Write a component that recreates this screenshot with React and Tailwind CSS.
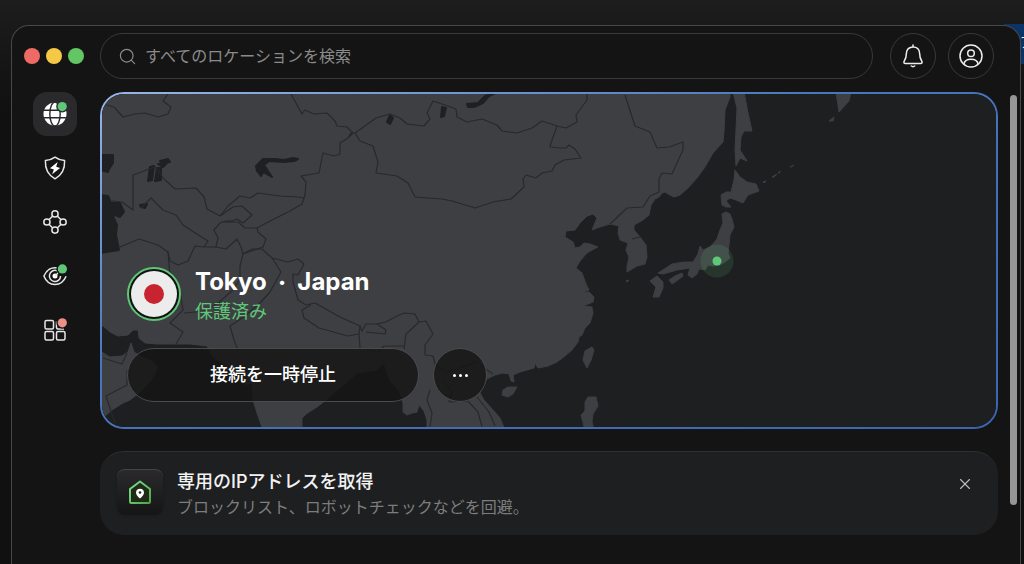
import React, { useState } from 'react';
import { Search, X } from 'lucide-react';

const GlobeIcon = () => (
  <svg width="24" height="24" viewBox="0 0 24 24" fill="none">
    <circle cx="12" cy="12" r="11.5" fill="#fff" />
    <g stroke="#2a2a2c" strokeWidth="1.4">
      <path d="M0 8.2h24M0 15.8h24" />
      <ellipse cx="12" cy="12" rx="5.2" ry="12" />
    </g>
    <circle cx="19.2" cy="4.6" r="6" fill="#2a2a2c" />
    <circle cx="19.2" cy="4.6" r="4.6" fill="#5fc878" />
  </svg>
);

const ShieldIcon = () => (
  <svg width="24" height="24" viewBox="0 0 24 24" fill="none">
    <path
      d="M12 1.2c2.6 2 5.7 3 9.6 3.4.4 8.2-2.6 14.4-9.6 18.2C5 19 2 12.8 2.4 4.6 6.3 4.2 9.4 3.2 12 1.2z"
      stroke="#e6e6e6"
      strokeWidth="1.5"
      strokeLinejoin="round"
    />
    <path d="M14.6 6 7 12.200l3.900 1.200-1.800 4.800 8-6.200-3.900-1.200z" fill="#fff" />
  </svg>
);

const MeshIcon = () => (
  <svg width="24" height="24" viewBox="0 0 24 24" fill="none" stroke="#e6e6e6" strokeWidth="1.5">
    <circle cx="12" cy="3.9" r="3.1" />
    <circle cx="12" cy="20.1" r="3.1" />
    <circle cx="3.9" cy="12" r="3.1" />
    <circle cx="20.1" cy="12" r="3.1" />
    <path d="M9.7 6 6 9.7M14.3 6 18 9.7M9.7 18 6 14.3M14.3 18l3.7-3.7" />
  </svg>
);

const EyeIcon = () => (
  <svg width="24" height="24" viewBox="0 0 24 24" fill="none" stroke="#e6e6e6" strokeWidth="1.5">
    <path d="M14.5 4C8.5 2.6 3.500 6 .9 12c2 5.200 6 8.500 11.100 8.500 5 0 9-3.300 11.100-8.300" />
    <path d="M14 6.700A5.600 5.600 0 1 0 17.600 12" />
    <circle cx="12" cy="12" r="2.5" fill="#fff" stroke="none" />
    <path d="m12 12 4-4" />
    <circle cx="19.4" cy="4.9" r="6" fill="#141414" stroke="none" />
    <circle cx="19.4" cy="4.9" r="4.6" fill="#5fc878" stroke="none" />
  </svg>
);

const AppsIcon = () => (
  <svg width="24" height="24" viewBox="0 0 24 24" fill="none" stroke="#e6e6e6" strokeWidth="1.5">
    <rect x="2" y="2.5" width="8.5" height="8.5" rx="1.5" />
    <rect x="2" y="13.5" width="8.5" height="8.5" rx="1.5" />
    <rect x="13.5" y="13.5" width="8.5" height="8.5" rx="1.5" />
    <path d="M13.500 3.500v6q0 1.500 1.500 1.500h6" />
    <circle cx="19.3" cy="4.8" r="6" fill="#141414" stroke="none" />
    <circle cx="19.3" cy="4.8" r="4.6" fill="#ec8f85" stroke="none" />
  </svg>
);

const BellIcon = () => (
  <svg width="24" height="24" viewBox="0 0 24 24" fill="none" stroke="#ededed" strokeWidth="1.5" strokeLinecap="round" strokeLinejoin="round">
    <path d="M12 .9v2M5.400 9.300C5.400 5.300 8.300 2.900 12 2.900s6.600 2.400 6.600 6.400c0 4.700 1 6.200 2.200 7.900.7 1.200.2 2.300-1.200 2.300H4.400c-1.400 0-1.900-1.100-1.200-2.300 1.200-1.700 2.200-3.200 2.200-7.900z" />
    <path d="M10.300 22q1.700 1.300 3.400 0" />
  </svg>
);

const AccountIcon = () => (
  <svg width="24" height="24" viewBox="0 0 24 24" fill="none" stroke="#ededed" strokeWidth="1.5">
    <circle cx="12" cy="12" r="11" />
    <circle cx="12" cy="9.3" r="3.3" />
    <path d="M4.900 20.200c.5-3.400 2.700-4.900 7.100-4.900s6.600 1.500 7.100 4.900" />
  </svg>
);

const HouseIcon = () => (
  <svg width="24" height="26" viewBox="0 0 24 26" fill="none">
    <defs>
      <linearGradient id="house" x1="0" y1="0" x2="1" y2="1">
        <stop offset="0" stopColor="#7be08c" />
        <stop offset="1" stopColor="#4fa544" />
      </linearGradient>
    </defs>
    <path d="M12 2.500 22 10v12.500q0 1.500-1.500 1.500h-17Q2 24 2 22.500V10z" fill="#1f2a17" stroke="url(#house)" strokeWidth="2" strokeLinejoin="round" />
    <path d="M12 9.800c2.300 0 4 1.600 4 3.900 0 2.200-1.900 3.900-4 5.800-2.100-1.900-4-3.600-4-5.800 0-2.300 1.700-3.900 4-3.900z" fill="#fff" />
    <circle cx="12" cy="13.5" r="1.3" fill="#1f2a17" />
  </svg>
);

const land = [
  // mainland
  'M100 92H730V97L725 110 724 132 723 142 713 153 705 167 697 178 688 188 680 195 674 197 668 194 665 192 662 193 659 197 655 199 651 205 649 215 643 220 634 225 634 230 640 237 646 245 647 257 645 264 637 266 627 272 627 267 629 257 626 250 628 243 620 240 618 233 619 226 610 224 600 227 592 230 597 218 593 214 587 216 580 223 575 230 566 231 565 237 573 242 575 248 580 247 584 243 590 244 598 247 594 249 587 253 580 261 576 268 582 273 586 284 589 290 582 292 589 292 594 297 593 302 583 306 592 307 593 313 590 323 585 328 582 335 579 337 578 342 572 350 565 356 557 362 548 366 538 368 535 363 534 368 520 372 513 375 514 382 511 381 509 374 503 373 495 375 487 379 482 385 480 393 484 400 493 410 500 418 505 430H427L427 420 424 411 419 405 417 412 412 413 407 415 403 412 403 403 400 392 390 381 384 363 376 370 357 373 345 384 337 390 326 400 317 407 306 414 302 418 302 430H263L257 413 253 400 252 383 246 385 237 372 230 372 222 363 213 357 207 346 190 344 157 344 145 343 139 338 138 330 133 330 128 335 118 336 110 332 103 326 100 326z',
  // arabia
  'M100 351 110 357 122 356 128 352 131 343 134 352 142 357 152 361 158 367 155 373 153 378 140 392 130 400 123 403 112 410 105 416 100 419z',
  // taiwan, hainan, luzon
  'M592 347 594 350 591 360 587 368 583 360 585 351z',
  'M517 387 513 394 508 397 502 395 503 390 508 387z',
  'M588 397 596 397 598 406 593 414 592 422 594 430H585L581 415 585 411 585 402z',
  // kyushu, shikoku, honshu
  'M650 281 657 276 663 282 663 288 659 297 653 297 656 287z',
  'M669 280 675 276 682 273 683 276 678 280 672 284z',
  'M658 273 666 268 672 264 684 262 693 262 698 254 700 246 703 250 710 247 717 239 720 230 723 223 722 214 726 212 730 214 732 219 734 227 730 235 729 245 728 253 730 258 725 262 720 265 713 266 708 265 705 270 699 269 697 274 692 278 688 275 690 268 677 270 663 274z',
  // hokkaido
  'M735 170 740 177 747 182 756 184 759 191 748 195 743 203 736 200 730 198 726 201 731 207 726 207 722 205 721 195 726 192 731 192 734 180z',
  // sakhalin, kamchatka, kurils
  'M733 92H744L748 113 752 131 744 131 741 137 740 150 747 161 740 158 736 166 735 150 736 130 737 108z',
  'M836 92H851L849 101 839 112z',
  'M829 121 834 117 833 121zM772 177l5-3-3 3zM763 182l3-1-2 2zM778 173l3-2-2 2zM790 167l4-2-3 2zM626 281l3-1-2 2z',
];

const water = [
  // caspian
  'M100 155 113 155 113 163 109 169 108 172 100 170z',
  'M100 195 108 196 111 203 120 203 124 212 120 217 112 214 117 225 116 235 119 250 100 253z',
  // aral, balkhash, baikal and others
  'M150 167 154 166 152 180 148 181zM157 168 161 168 161 180 155 181zM158 164 167 163 163 167zM160 161 168 159 170 162 164 163zM140 205 147 204 145 208 141 207z',
  'M256 166 263 159 275 159 284 160 293 158 298 159 294 161 284 162 269 161 264 165 272 177 263 172 261 176 257 171z',
  'M467 104 478 103 485 96 497 92 488 97 483 103 474 107 468 107z',
  'M390 115 393 118 390 124 387 122zM442 107 446 108 444 116 441 117z',
];

const borders = [
  'M106 105 114 107 123 117 135 114 145 113 158 117 168 114 171 107 163 101 168 94',
  'M291 94 302 114 305 110 314 114 327 113 335 121 337 126 347 127 353 133',
  'M353 133 349 137 351 133 355 133 362 128 376 118 390 114 400 118 407 124 424 126 430 119 427 113 433 101 445 105 456 109 457 117 467 122 482 119 497 125 502 131 517 133 532 128 542 121 557 126 566 128 577 122 576 115 587 100 587 94',
  'M557 126 551 143 550 147 560 148 566 148 569 145 575 149 581 158 564 160 555 165 552 171 542 173 536 178 526 175 523 179 524 187 511 199 493 202 475 208 452 201 442 199 415 197 408 183 397 176 376 173 378 162 373 146 360 141 355 133',
  'M351 133 348 138 340 143 340 154 334 156 323 153 319 173 301 176 306 182 305 195 302 204 290 211 278 217 270 221 257 228',
  'M625 95 635 126 650 132 657 148 669 147 683 142 683 150 672 174 662 173 659 179 659 192 650 196 643 207 627 208 610 224',
  'M632 239 640 237',
  'M305 198 298 197 280 196 258 193 250 198 240 196 228 206 220 216 207 209 204 197 196 188 175 189 164 179 155 167 133 175 133 210 122 202 112 201',
  'M141 208 151 198 163 210 176 215 183 225 203 238 208 241 204 247 195 246 188 261 178 265 170 261 168 252 158 245 139 239 120 247',
  'M220 216 233 207 242 206 252 215 243 223 237 219 232 221 226 221 220 223 214 230 218 238 216 247 226 249 237 239 241 247 243 254 263 247 266 239 258 232 257 228 245 228 238 222 221 222',
  'M204 247 216 247M243 254 240 266 240 279 233 290 218 303 205 311 184 313',
  'M168 252 170 276 180 290 183 310 170 323 183 332 176 344',
  'M243 254 252 249 262 249 272 258 288 262 298 259 304 264 298 275 293 274 293 282 298 300 306 305 315 303 340 317 360 326 359 334 348 336 319 328 304 318 302 310 311 305',
  'M360 326 362 331 366 324 376 324 386 322 395 317 404 313 415 314 419 322 406 334 404 349 M366 332 385 334 386 330 377 324M419 322 426 321 433 334 425 345 425 355 433 356 435 364',
  'M272 258 281 272 270 292 260 303 245 316 230 326 234 340 238 350M359 334 360 348 378 352 384 346 404 346',
  'M435 364 446 372 460 368 470 364 477 362M480 365 493 374M430 390 427 400 432 413 430 427M443 380 452 392 449 402 468 401 478 412 482 427M477 397 489 412 495 426',
  'M115 423 106 396 127 385 127 370M127 353 122 364 103 358',
];

const MapBackdrop = () => (
  <svg
    className="absolute inset-0 h-full w-full"
    viewBox="102 94 894 333"
    preserveAspectRatio="xMidYMid slice"
    aria-hidden="true"
  >
    <rect x="0" y="0" width="1100" height="600" fill="#1e1f21" />
    <g fill="#3e3f43" stroke="#3e3f43" strokeWidth="1" strokeLinejoin="round">
      {land.map((d) => <path key={d} d={d} />)}
    </g>
    <g fill="#1f2022" stroke="#1f2022" strokeWidth="2" strokeLinejoin="round">
      {water.map((d) => <path key={d} d={d} />)}
    </g>
    <g fill="none" stroke="#28292c" strokeWidth="1.2" strokeLinejoin="round">
      {borders.map((d) => <path key={d} d={d} />)}
    </g>
    <circle cx="717" cy="261" r="16.5" fill="#5fc878" fillOpacity="0.14" />
    <circle cx="717" cy="261" r="4.5" fill="#5fc878" />
  </svg>
);

const navItems = [
  { id: 'vpn', label: 'VPN', icon: GlobeIcon },
  { id: 'threat', label: '脅威対策', icon: ShieldIcon },
  { id: 'mesh', label: 'メッシュネット', icon: MeshIcon },
  { id: 'monitor', label: 'モニター', icon: EyeIcon },
  { id: 'apps', label: 'アプリ', icon: AppsIcon },
];

const Sidebar = () => {
  const [active, setActive] = useState('vpn');

  return (
    <nav className="flex w-[88px] shrink-0 flex-col items-center gap-[10px] pr-[2px]">
      {navItems.map(({ id, label, icon: Icon }) => (
        <button
          key={id}
          type="button"
          aria-label={label}
          onClick={() => setActive(id)}
          className={`flex size-11 cursor-pointer items-center justify-center rounded-[14px] ${
            active === id ? 'bg-[#2a2a2c]' : ''
          }`}
        >
          <Icon />
        </button>
      ))}
    </nav>
  );
};

const Header = () => {
  const [query, setQuery] = useState('');

  return (
    <header className="flex items-center pt-[7px] pr-[26px]">
      <div className="flex w-[88px] shrink-0 gap-[6px] pl-3">
        <button type="button" aria-label="閉じる" className="size-4 rounded-full bg-[#ee6a65]" />
        <button type="button" aria-label="最小化" className="size-4 rounded-full bg-[#f5c945]" />
        <button type="button" aria-label="最大化" className="size-4 rounded-full bg-[#62c664]" />
      </div>
      <label className="flex h-[46px] min-w-0 flex-1 items-center gap-2 rounded-full border border-[#38393a] px-[17px]">
        <Search size={19} strokeWidth={1.5} className="shrink-0 text-[#8b8b8b]" />
        <input
          type="text"
          aria-label="すべてのロケーションを検索"
          placeholder="すべてのロケーションを検索"
          value={query}
          onChange={(e) => setQuery(e.target.value)}
          className="min-w-0 flex-1 bg-transparent text-base text-white outline-none placeholder:text-[#8b8b8b]"
        />
      </label>
      <div className="ml-[17px] flex gap-3">
        <button type="button" aria-label="通知" className="flex size-[46px] items-center justify-center rounded-full border border-[#38393a]">
          <BellIcon />
        </button>
        <button type="button" aria-label="アカウント" className="flex size-[46px] items-center justify-center rounded-full border border-[#38393a]">
          <AccountIcon />
        </button>
      </div>
    </header>
  );
};

const ConnectionCard = () => (
  <section className="rounded-3xl bg-linear-to-br from-[#9ab6e6] via-[#4a76bd] via-40% to-[#3b65b0] p-[2px]">
    <div className="relative flex h-[333px] flex-col justify-end overflow-hidden rounded-[22px] bg-[#1e1f21] p-[25px]">
      <MapBackdrop />
      <div className="relative flex items-center gap-[14px]">
        <div className="flex size-[54px] items-center justify-center rounded-full border-2 border-[#5fc878] bg-[#141414]">
          <div className="flex size-[46px] items-center justify-center rounded-full bg-[#ececec]">
            <div className="size-5 rounded-full bg-[#c8242f]" />
          </div>
        </div>
        <div className="pt-1">
          <h1 className="flex items-center gap-3 text-2xl leading-8 font-bold text-white">
            <span>Tokyo</span>
            <span className="text-sm leading-8">•</span>
            <span>Japan</span>
          </h1>
          <p className="text-lg leading-7 text-[#5fc878]">保護済み</p>
        </div>
      </div>
      <div className="relative mt-[22px] flex gap-[14px]">
        <button type="button" className="h-[54px] w-[292px] cursor-pointer rounded-full border border-[#4b4b4d] bg-[#141414]/80 text-lg font-medium text-white">
          接続を一時停止
        </button>
        <button type="button" aria-label="その他" className="flex size-[54px] cursor-pointer items-center justify-center gap-[3px] rounded-full border border-[#4b4b4d] bg-[#141414]/80">
          <i className="size-[3px] rounded-full bg-white" />
          <i className="size-[3px] rounded-full bg-white" />
          <i className="size-[3px] rounded-full bg-white" />
        </button>
      </div>
    </div>
  </section>
);

const Banner = () => {
  const [open, setOpen] = useState(true);
  if (!open) return null;

  return (
    <section className="flex h-[84px] items-center gap-[14px] rounded-3xl border-t border-[#2f3031] bg-[#1e1f21] pr-6 pl-[17px]">
      <div className="mb-1 flex size-[46px] items-center justify-center rounded-lg border-t border-[#454547] bg-linear-to-b from-[#2a2a2c] to-[#151516] shadow">
        <HouseIcon />
      </div>
      <div className="min-w-0 flex-1">
        <h2 className="text-lg leading-[26px] font-medium text-[#f2f2f2]">専用のIPアドレスを取得</h2>
        <p className="text-base leading-6 text-[#7d7d7e]">ブロックリスト、ロボットチェックなどを回避。</p>
      </div>
      <button type="button" aria-label="閉じる" onClick={() => setOpen(false)} className="mb-5 cursor-pointer text-[#bdbdbd]">
        <X size={18} strokeWidth={1.5} />
      </button>
    </section>
  );
};

const App = () => {
  return (
    <div className="relative flex min-h-screen flex-col overflow-hidden bg-linear-to-b from-[#1d1d1d] to-[#101010] to-20% pt-[25px] pr-[3px] pl-[11px] font-['Inter','Noto_Sans_CJK_JP',sans-serif]">
      {/* sliver of the app behind this window */}
      <div className="absolute top-6 right-0 h-10 w-5 overflow-hidden bg-[#0a3468] pl-4 text-sm leading-9 text-white">ア</div>
      <div className="relative flex flex-1 flex-col rounded-t-[18px] border border-b-0 border-[#48484a] bg-[#141414]">
        <Header />
        <div className="flex pt-[13px]">
          <Sidebar />
          <main className="flex min-w-0 flex-1 flex-col gap-[22px] pb-7">
            <ConnectionCard />
            <Banner />
          </main>
          <div className="mt-[3px] mr-[3px] ml-3 h-[410px] w-[7px] shrink-0 rounded-full bg-[#969696]" />
        </div>
      </div>
    </div>
  );
};

export default App;
